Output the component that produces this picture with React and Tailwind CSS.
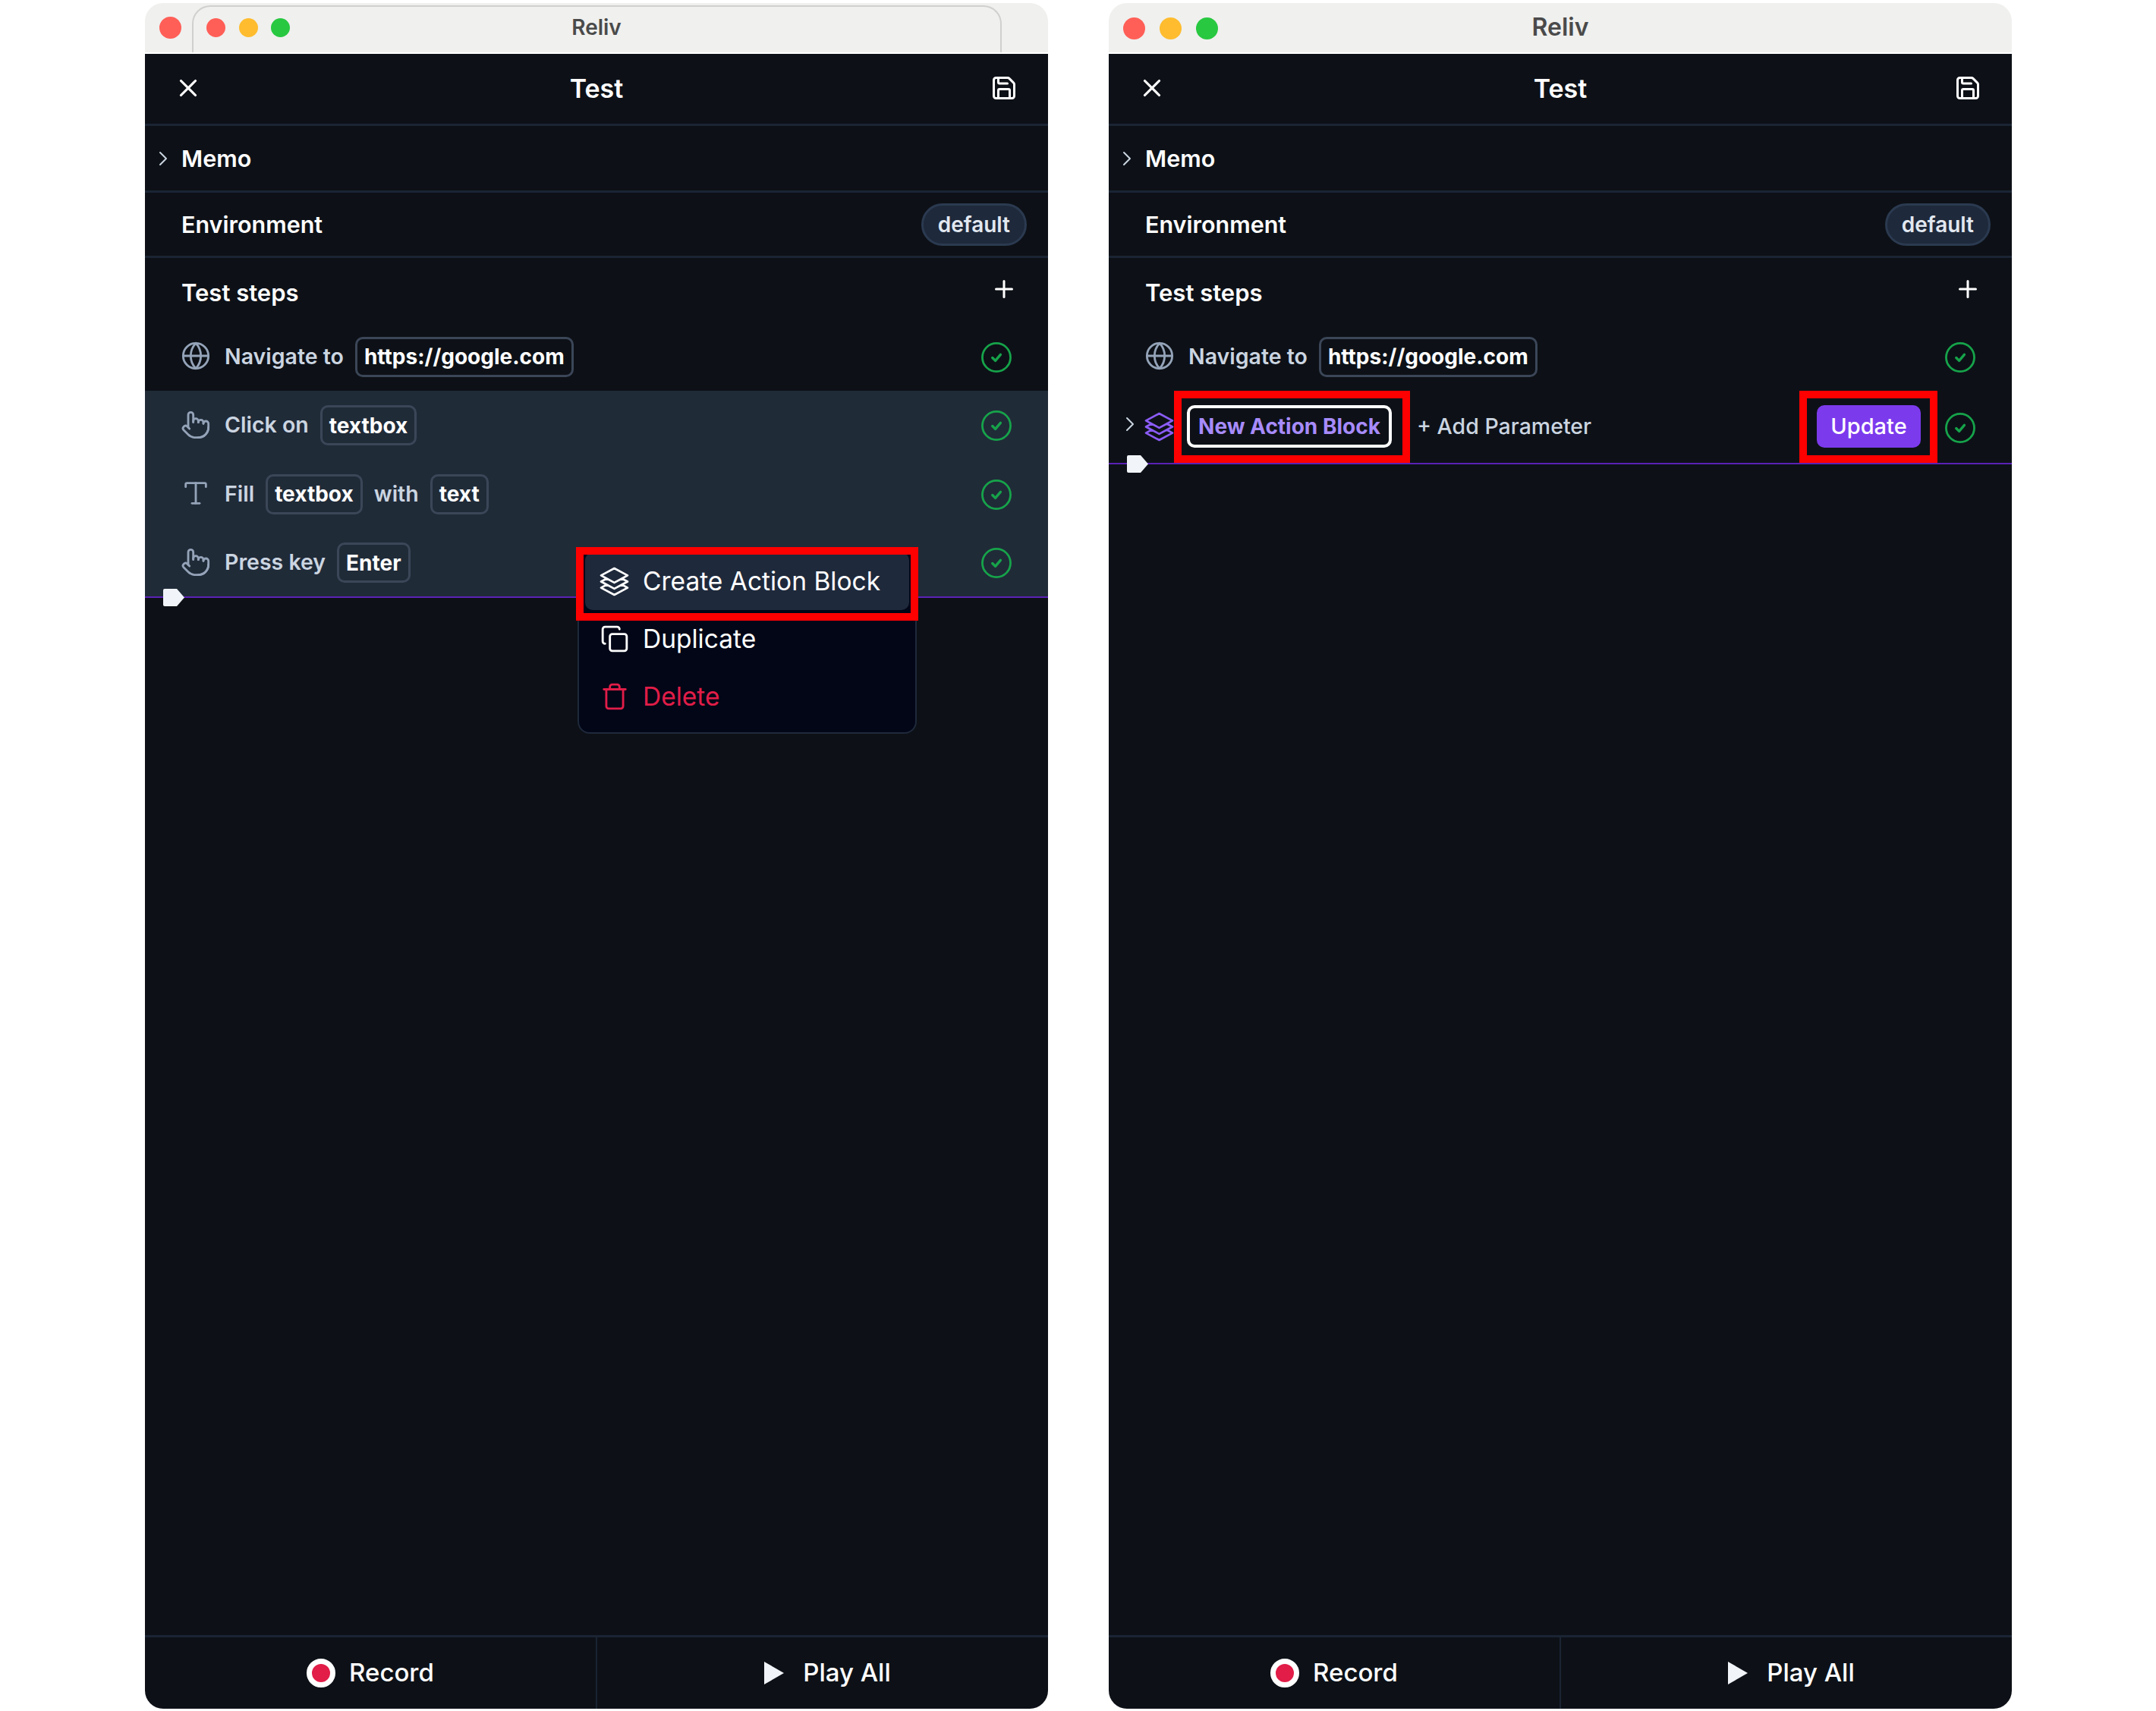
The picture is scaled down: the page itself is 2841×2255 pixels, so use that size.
import React from "react";
import { ChevronRight, Copy, Globe, Plus, Pointer, Save, Trash, Type, X } from "lucide-react";
import { HiOutlineSquare3Stack3D } from "react-icons/hi2";

const StepCheck = () => (
  <svg width="42" height="42" viewBox="0 0 24 24" fill="none" className="mt-[3px] shrink-0">
    <circle cx="12" cy="12" r="10.6" stroke="#16a34a" strokeWidth="1.6" />
    <path d="M9 12.3l2.2 2.2 3.9-4.6" stroke="#16a34a" strokeWidth="1.9" strokeLinecap="round" strokeLinejoin="round" />
  </svg>
);

const Chip = ({ children }) => (
  <span className="flex h-[53px] items-center rounded-[10px] border-[3px] border-[#3b4658] px-[9px] text-[28px] font-bold text-white">
    {children}
  </span>
);

const Label = ({ children }) => (
  <span className="text-[28.5px] font-semibold text-[#cbd5e1]">{children}</span>
);

const StepRow = ({ icon: Icon, children }) => (
  <div className="flex h-[90.5px] items-center pl-[47px] pr-[47px]">
    <Icon size={40} strokeWidth={1.7} className="mr-[18px] shrink-0 text-[#94a3b8]" />
    <div className="flex flex-1 items-center gap-[15px] pt-[2px]">{children}</div>
    <StepCheck />
  </div>
);

const Marker = () => (
  <svg width="30" height="25" viewBox="0 0 30 25" className="absolute left-[23px] top-[-11px]">
    <path d="M3 1h16l10 11.5L19 24H3a2 2 0 0 1-2-2V3a2 2 0 0 1 2-2z" fill="#f1f5f9" />
  </svg>
);

const TitleBar = ({ size, children }) => (
  <div className="relative flex h-[65px] shrink-0 items-center justify-center rounded-t-[24px] bg-[#f0f0ee] pb-[2px]">
    {children}
    <span className={`relative font-semibold text-[#4a4a4a] ${size}`}>Reliv</span>
  </div>
);

const Panel = ({ titleBar, steps, overlay }) => (
  <div className="relative flex h-[2248px] w-[1190px] flex-col">
    {titleBar}
    <div className="flex min-h-0 flex-1 flex-col rounded-b-[24px] border-t-2 border-white bg-[#0d1117]">
      <div className="flex h-[95px] shrink-0 items-center justify-between border-b-[3px] border-[#1a2433] pb-[2px] pl-[38px] pr-[40px]">
        <X size={38} strokeWidth={2} className="text-white" />
        <span className="text-[34px] font-semibold text-white">Test</span>
        <Save size={36} strokeWidth={2} className="text-white" />
      </div>
      <div className="flex h-[88px] shrink-0 items-center border-b-[3px] border-[#1a2433] pl-[8px]">
        <ChevronRight size={32} strokeWidth={1.5} className="mr-[8px] text-[#cbd5e1]" />
        <span className="text-[30.5px] font-semibold text-white">Memo</span>
      </div>
      <div className="flex h-[86px] shrink-0 items-center justify-between border-b-[3px] border-[#1a2433] pl-[48px] pr-[28px]">
        <span className="text-[30.5px] font-semibold text-white">Environment</span>
        <span className="flex h-[56px] items-center rounded-full border-[3px] border-[#2b3a50] bg-[#1e293b] px-[19px] text-[28px] font-semibold text-[#e2e8f0]">
          default
        </span>
      </div>
      <div className="flex h-[84px] shrink-0 items-center justify-between pl-[48px] pr-[40px] pt-[8px]">
        <span className="text-[31px] font-semibold text-white">Test steps</span>
        <Plus size={36} strokeWidth={2} className="mb-[10px] text-white" />
      </div>
      <StepRow icon={Globe}>
        <Label>Navigate to</Label>
        <Chip>https://google.com</Chip>
      </StepRow>
      {steps}
      <div className="flex-1" />
      <div className="flex h-[97px] shrink-0 border-t-[3px] border-[#1a2433]">
        <div className="flex flex-1 items-center justify-center gap-[18px] border-r-2 border-[#1a2433]">
          <span className="h-[38px] w-[38px] rounded-full border-[7px] border-white bg-[#e11d48]" />
          <span className="text-[33px] font-medium text-white">Record</span>
        </div>
        <div className="flex flex-1 items-center justify-center gap-[24px]">
          <svg width="28" height="32" viewBox="0 0 28 32" className="ml-[12px]">
            <path d="M1 1v30l26-15z" fill="#f1f5f9" />
          </svg>
          <span className="text-[33px] font-medium text-white">Play All</span>
        </div>
      </div>
    </div>
    {overlay}
  </div>
);

const ContextMenu = () => (
  <div className="absolute left-[570px] top-[716px] h-[247px] w-[447px] rounded-[16px] border-2 border-[#1e293b] bg-[#020617] p-[8px] pt-[6px]">
    <div className="flex h-[76px] items-center gap-[19px] whitespace-nowrap rounded-[10px] bg-[#1e293b] px-[20px] text-[33.5px] text-white">
      <HiOutlineSquare3Stack3D size={43} className="-mx-[3px] shrink-0" />
      Create Action Block
    </div>
    <div className="flex h-[76px] items-center gap-[18px] px-[20px] text-[33.5px] text-white">
      <Copy size={38} strokeWidth={1.8} className="shrink-0" />
      Duplicate
    </div>
    <div className="flex h-[76px] items-center gap-[18px] px-[20px] text-[33.5px] text-[#e11d48]">
      <Trash size={38} strokeWidth={1.8} className="shrink-0" />
      Delete
    </div>
    <div className="absolute left-[-4px] top-[-1px] h-[97px] w-[451px] border-[10px] border-[#ff0000]" />
  </div>
);

export default function App() {
  return (
    <div className="flex min-h-screen items-start gap-[80px] bg-white pl-[191px] pt-[4px] font-['Inter',sans-serif]">
      <Panel
        titleBar={
          <TitleBar size="text-[28px]">
            <span className="absolute left-[19px] top-[18px] h-[29px] w-[29px] rounded-full bg-[#ff5f57]" />
            <div className="absolute bottom-0 left-[62px] right-[61px] top-[3px] rounded-t-[24px] border-x-2 border-t-2 border-b-0 border-[#d0d0ce]" />
            <span className="absolute left-[81px] top-[20px] h-[25px] w-[25px] rounded-full bg-[#ff5f57]" />
            <span className="absolute left-[124px] top-[20px] h-[25px] w-[25px] rounded-full bg-[#febc2e]" />
            <span className="absolute left-[166px] top-[20px] h-[25px] w-[25px] rounded-full bg-[#28c840]" />
          </TitleBar>
        }
        steps={
          <>
            <div className="flex shrink-0 flex-col bg-[#202b38]">
              <StepRow icon={Pointer}>
                <Label>Click on</Label>
                <Chip>textbox</Chip>
              </StepRow>
              <StepRow icon={Type}>
                <Label>Fill</Label>
                <Chip>textbox</Chip>
                <Label>with</Label>
                <Chip>text</Chip>
              </StepRow>
              <StepRow icon={Pointer}>
                <Label>Press key</Label>
                <Chip>Enter</Chip>
              </StepRow>
            </div>
            <div className="relative h-[2px] shrink-0 bg-[#5b21b6]">
              <Marker />
            </div>
          </>
        }
        overlay={<ContextMenu />}
      />
      <Panel
        titleBar={
          <TitleBar size="text-[32px]">
            <span className="absolute left-[19px] top-[19px] h-[29px] w-[29px] rounded-full bg-[#ff5f57]" />
            <span className="absolute left-[67px] top-[19px] h-[29px] w-[29px] rounded-full bg-[#febc2e]" />
            <span className="absolute left-[115px] top-[19px] h-[29px] w-[29px] rounded-full bg-[#28c840]" />
          </TitleBar>
        }
        steps={
          <>
            <div className="flex h-[95px] shrink-0 items-center pl-[12px] pr-[47px]">
              <ChevronRight size={32} strokeWidth={1.5} className="mb-[7px] mr-[1px] shrink-0 text-[#cbd5e1]" />
              <HiOutlineSquare3Stack3D size={43} className="mr-[15px] shrink-0 text-[#8b5cf6]" />
              <span className="relative mr-[33px] flex h-[56px] w-[270px] items-center justify-center rounded-[10px] border-4 border-white text-[28px] font-bold text-[#a78bfa]">
                New Action Block
                <span className="absolute -bottom-[24px] -left-[21px] -right-[28px] -top-[23px] border-[10px] border-[#ff0000]" />
              </span>
              <span className="text-[28.5px] font-medium text-[#cbd5e1]">+ Add Parameter</span>
              <span className="relative ml-auto mr-[31px] flex h-[56px] w-[137px] items-center justify-center rounded-[10px] bg-[#7c3aed] text-[29px] font-medium text-white">
                Update
                <span className="absolute -bottom-[20px] -left-[23px] -right-[22px] -top-[19px] border-[10px] border-[#ff0000]" />
              </span>
              <StepCheck />
            </div>
            <div className="relative h-[2px] shrink-0 bg-[#5b21b6]">
              <Marker />
            </div>
          </>
        }
      />
    </div>
  );
}
